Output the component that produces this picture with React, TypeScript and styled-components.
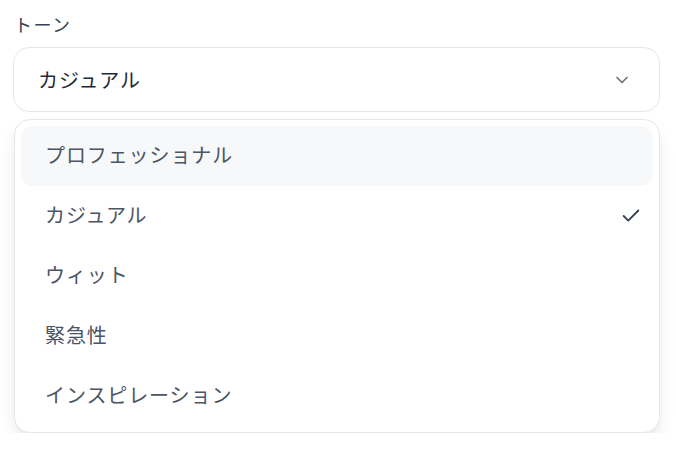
import React from 'react';
import styled, { createGlobalStyle } from 'styled-components';

const GlobalStyle = createGlobalStyle`
  body {
    margin: 0;
    background: #ffffff;
    font-family: 'Noto Sans CJK JP', 'Noto Sans', sans-serif;
  }
`;

const options = ['プロフェッショナル', 'カジュアル', 'ウィット', '緊急性', 'インスピレーション'];

export default function App() {
  const selected = 'カジュアル';
  const highlighted = 'プロフェッショナル';

  return (
    <>
      <GlobalStyle />
      <Page>
        <Label>トーン</Label>
        <Trigger>
          <span>{selected}</span>
          <svg width='20' height='20' viewBox='0 0 24 24' fill='none' stroke='#6b7280' strokeWidth='2' strokeLinecap='round' strokeLinejoin='round'>
            <path d='m6 9 6 6 6-6' />
          </svg>
        </Trigger>
        <Menu>
          {options.map((o) => (
            <Item key={o} $active={o === highlighted}>
              <span>{o}</span>
              {o === selected && (
                <svg width='22' height='22' viewBox='0 0 24 24' fill='none' stroke='#374151' strokeWidth='2' strokeLinecap='round' strokeLinejoin='round'>
                  <path d='M20 6 9 17l-5-5' />
                </svg>
              )}
            </Item>
          ))}
        </Menu>
      </Page>
    </>
  );
}

const Page = styled.div`
  width: 647px;
  padding: 10px 0 0 13px;
`;

const Label = styled.div`
  font-size: 18px;
  line-height: 28px;
  letter-spacing: 1.5px;
  color: #374151;
  margin-bottom: 9px;
  padding-left: 1px;
`;

const Trigger = styled.div`
  box-sizing: border-box;
  height: 65px;
  border: 1px solid #e5e7eb;
  border-radius: 16px;
  display: flex;
  align-items: center;
  justify-content: space-between;
  padding: 0 27px 0 24px;
  font-size: 20px;
  letter-spacing: 1px;
  color: #1f2937;
`;

const Menu = styled.div`
  box-sizing: border-box;
  margin-top: 7px;
  margin-left: 1px;
  border: 1px solid #e5e7eb;
  border-radius: 16px;
  padding: 6px;
  background: #ffffff;
  box-shadow: 0 10px 20px -3px rgba(0, 0, 0, 0.09), 0 4px 8px -4px rgba(0, 0, 0, 0.08);
`;

const Item = styled.div<{ $active?: boolean }>`
  box-sizing: border-box;
  height: 60px;
  display: flex;
  align-items: center;
  justify-content: space-between;
  padding: 0 11px 3px 24px;
  border-radius: 12px;
  font-size: 20px;
  letter-spacing: 0.9px;
  color: #4b5563;
  background: ${({ $active }) => ($active ? '#f7f8fa' : 'transparent')};

  svg {
    margin-top: 3px;
  }
`;
